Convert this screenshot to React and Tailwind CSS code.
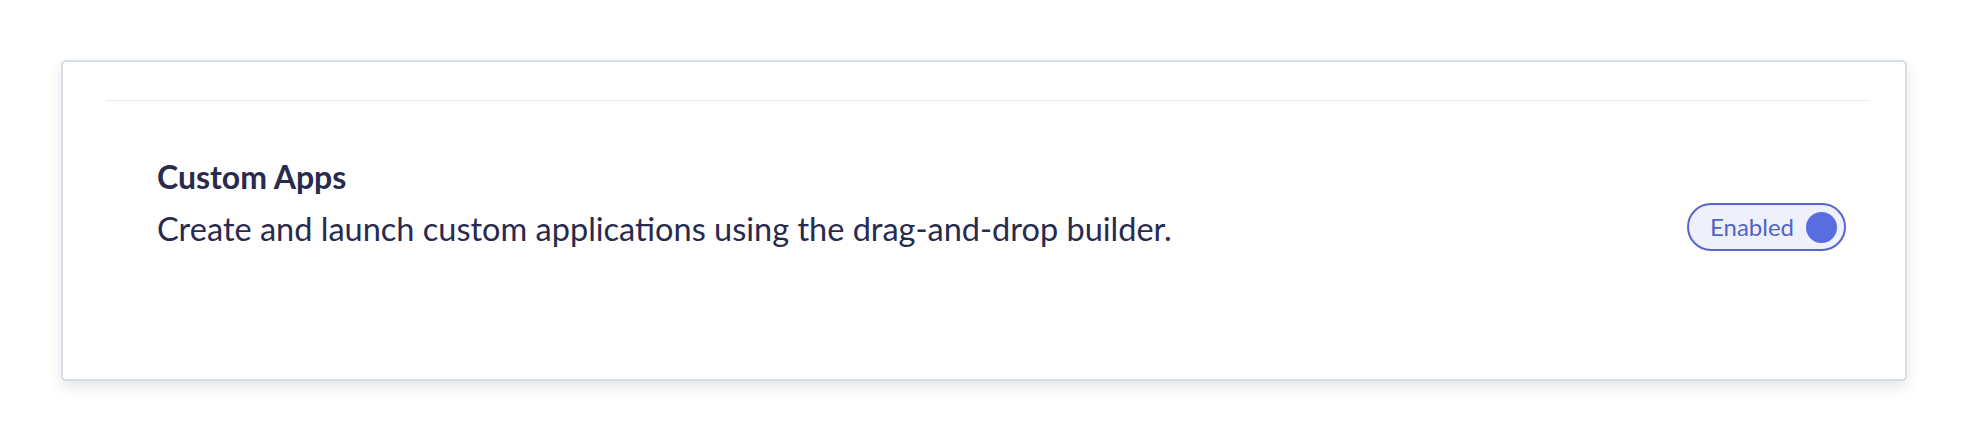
import React, { useState } from 'react';

const App = () => {
  const [enabled, setEnabled] = useState(true);

  return (
    <div className="min-h-screen bg-white pt-[60px] pl-[61px] pr-[61px] font-['Lato',sans-serif]">
      <div className="h-[321px] rounded-[5px] border-2 border-[#d5dde6] bg-white shadow-[0_6px_14px_rgba(30,40,60,0.12)]">
        <div className="ml-[43px] mr-[37px] mt-[38px] border-t border-[#e6eaef]">
          <div className="flex items-start justify-between pl-[51px] pr-[22px] pt-[50px]">
            <div className="text-[#282a4e]">
              <h2 className="text-[32px] font-bold leading-[52px]">Custom Apps</h2>
              <p className="text-[32.5px] leading-[52px]">
                Create and launch custom applications using the drag-and-drop builder.
              </p>
            </div>
            <button
              onClick={() => setEnabled((v) => !v)}
              className="mt-[52px] flex h-[48px] w-[159px] items-center justify-between rounded-full border-2 border-[#5666cc] bg-[#eef0fb] pl-[21px] pr-[7px]"
            >
              <span className="text-[24px] text-[#5263c6]">{enabled ? 'Enabled' : 'Disabled'}</span>
              <span className="h-[31px] w-[31px] rounded-full bg-[#5a6de0]" />
            </button>
          </div>
        </div>
      </div>
    </div>
  );
};

export default App;
